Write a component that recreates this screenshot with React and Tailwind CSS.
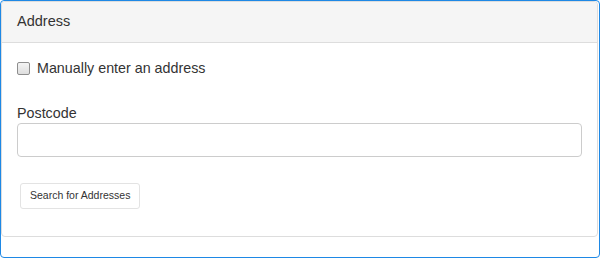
export default function App() {
  return (
    <div className="w-[600px] h-[258px] border border-[#1e88e5] rounded-[4px] bg-white font-['Liberation_Sans',Arial,sans-serif] text-[#333] overflow-hidden">
      <div className="border border-[#ddd] rounded-[4px] mb-[20px] mr-[1px]">
        {/* Heading */}
        <div className="h-[41px] px-[15px] flex items-center bg-[#f5f5f5] border-b border-[#ddd] rounded-t-[4px] text-[14.5px]">
          Address
        </div>

        {/* Body */}
        <div className="px-[15px] pt-[15px] pb-[27px]">
          <label className="flex items-center h-[20px] text-[14.3px] leading-[20px]">
            <span className="w-[13px] h-[13px] border border-[#8e8e8e] rounded-[2px] bg-gradient-to-b from-[#f4f4f4] to-[#dedede] mr-[7px]" />
            Manually enter an address
          </label>

          <div className="mt-[25px]">
            <label className="block text-[14.3px] leading-[20px]">Postcode</label>
            <input
              type="text"
              className="block w-full h-[34px] border border-[#ccc] rounded-[4px] px-3 outline-none"
            />
          </div>

          <button className="mt-[26px] ml-[3px] h-[26px] px-[9px] bg-white border border-[#e3e3e3] rounded-[3px] text-[10.5px] text-[#333]">
            Search for Addresses
          </button>
        </div>
      </div>
    </div>
  );
}
